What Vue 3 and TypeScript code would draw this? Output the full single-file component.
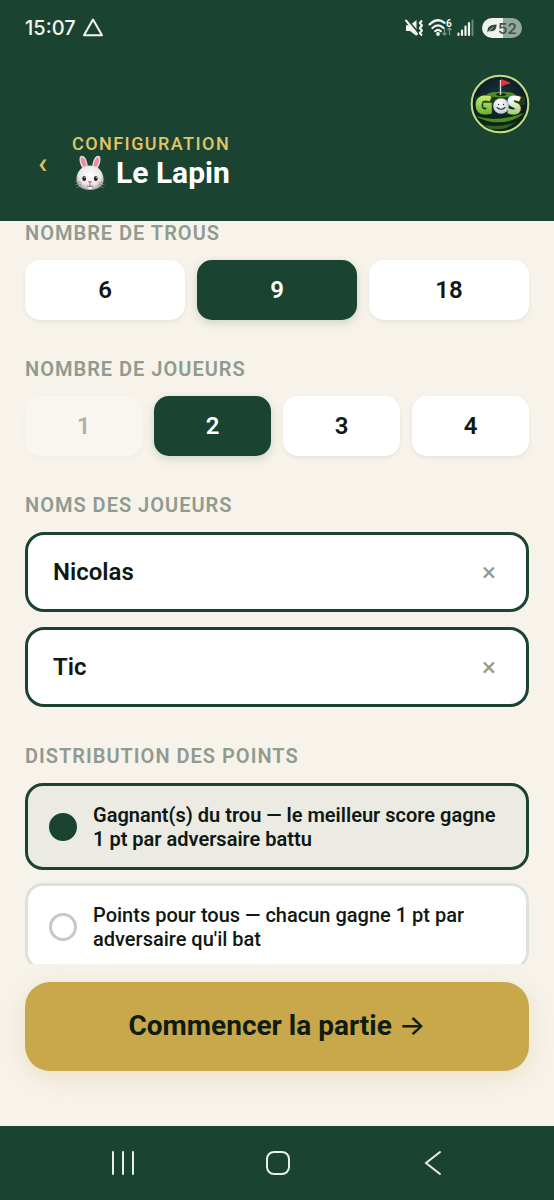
<script setup lang="ts">
import { ref } from 'vue'

interface Player {
  id: number
  name: string
}

interface Rule {
  value: string
  text: string
}

const holeChoices: number[] = [6, 9, 18]
const playerChoices: number[] = [1, 2, 3, 4]
const minPlayers = 2

const holes = ref<number>(9)
const playerCount = ref<number>(2)
const players = ref<Player[]>([
  { id: 1, name: 'Nicolas' },
  { id: 2, name: 'Tic' },
])

const rules: Rule[] = [
  { value: 'winner', text: 'Gagnant(s) du trou — le meilleur score gagne 1 pt par adversaire battu' },
  { value: 'all', text: "Points pour tous — chacun gagne 1 pt par adversaire qu'il bat" },
]
const rule = ref<string>('winner')

function setPlayerCount(count: number): void {
  playerCount.value = count
  const next = players.value.slice(0, count)
  while (next.length < count) next.push({ id: next.length + 1, name: '' })
  players.value = next
}
</script>

<template>
  <div class="screen">
    <header class="top">
      <div class="status">
        <div class="status-side">
          <span class="clock">15:07</span>
          <svg class="triangle" viewBox="0 0 22 20" width="22" height="20" aria-hidden="true">
            <path d="M11 1.500 20 17.300H2Z" fill="none" stroke="#f2f7f1" stroke-width="2" stroke-linejoin="round" />
          </svg>
        </div>
        <div class="status-side status-icons">
          <svg viewBox="0 0 20 20" width="20" height="20" aria-hidden="true">
            <path d="M2 7.200h4L12.500 2v16L6 13H2Z" fill="#f2f7f1" />
            <path d="M3 1 15 15.500" stroke="#1b4332" stroke-width="1.800" />
            <path d="M2 2.500 13 16" stroke="#f2f7f1" stroke-width="2" stroke-linecap="round" />
            <path d="M18 2.500 15.800 5 18 7.500 15.800 10 18 12.500 15.800 15 18 17.500" fill="none" stroke="#f2f7f1" stroke-width="2" stroke-linejoin="round" />
          </svg>
          <svg viewBox="0 0 25 20" width="25" height="20" aria-hidden="true">
            <g fill="none" stroke="#f2f7f1" stroke-width="2.2" stroke-linecap="round">
              <path d="M1.6 6.4Q9.5-1 16.5 4.8" />
              <path d="M4.4 10Q10 4.6 15.6 10" />
              <path d="M7.2 13.2Q10 10.6 12.8 13.2" />
            </g>
            <circle cx="10" cy="16" r="1.9" fill="#f2f7f1" />
            <text x="18" y="8.5" class="wifi-six">6</text>
            <path d="M16.5 10v7m-2-2 2 2 2-2M21.5 17v-7m-2 2 2-2 2 2" fill="none" stroke="#7d9a8b" stroke-width="1.2" />
          </svg>
          <svg viewBox="0 0 17 18" width="17" height="18" aria-hidden="true">
            <path d="M1.500 14.500v1.500M5 11.500v4.500M8.500 7.500v8.500M12 4v12" stroke="#f2f7f1" stroke-width="2.200" stroke-linecap="round" />
            <path d="M15.500 1.500v14.500" stroke="#6f8f80" stroke-width="1.800" stroke-linecap="round" />
          </svg>
          <span class="battery">
            <svg viewBox="0 0 10 9" width="10" height="9" aria-hidden="true">
              <path d="M.5 8.500C0 3 2.500.8 9.600.5 9.600 5.500 7 8 3 7Z" fill="#34483e" />
              <path d="M.5 8.500 6.500 3.200" stroke="#dfe6e0" stroke-width=".8" />
            </svg>
            <span>52</span>
          </span>
        </div>
      </div>

      <div class="brand">
        <svg viewBox="0 0 60 60" width="60" height="60" role="img" aria-label="GOS">
          <defs>
            <radialGradient id="logo-night" cx="50%" cy="38%" r="60%">
              <stop offset="0" stop-color="#1b3540" />
              <stop offset="1" stop-color="#07131c" />
            </radialGradient>
            <linearGradient id="logo-lime" x1="0" y1="0" x2="0" y2="1">
              <stop offset="0.200" stop-color="#d0f070" />
              <stop offset="0.900" stop-color="#5aa828" />
            </linearGradient>
            <linearGradient id="logo-steel" x1="0" y1="0" x2="0" y2="1">
              <stop offset="0.350" stop-color="#ffffff" />
              <stop offset="0.800" stop-color="#9ccb68" />
            </linearGradient>
            <radialGradient id="logo-ball" cx="42%" cy="34%" r="65%">
              <stop offset="0" stop-color="#ffffff" />
              <stop offset="1" stop-color="#c6cccf" />
            </radialGradient>
            <clipPath id="logo-clip"><circle cx="30" cy="30" r="28" /></clipPath>
          </defs>
          <circle cx="30" cy="30" r="28.500" fill="url(#logo-night)" />
          <g clip-path="url(#logo-clip)">
            <path d="M5 23Q30 14 55 23V31H5Z" fill="#1c3d1c" />
            <ellipse cx="31" cy="20.500" rx="14" ry="2.800" fill="#4f8a28" />
            <ellipse cx="31" cy="20.500" rx="5" ry="1.300" fill="#0c1f12" />
            <path d="M2 37Q29 49 58 36V60H2Z" fill="#0d2416" />
            <path d="M6 42Q26 49 54 39Q42 50 22 48Q12 46 6 42Z" fill="#4c8c26" />
            <path d="M14 51Q31 54 46 48Q36 57 20 55Z" fill="#2d6421" />
          </g>
          <circle cx="30" cy="30" r="28.300" fill="none" stroke="#c3dc86" stroke-width="2" />
          <path d="M30.500 21V6" stroke="#d8dadd" stroke-width="1.400" />
          <path d="M31 5 41 9 31 12.500Z" fill="#ed3038" />
          <g class="logo-word">
            <text x="5" y="40" fill="url(#logo-lime)" stroke="url(#logo-lime)">G</text>
            <text x="37" y="40" fill="url(#logo-steel)" stroke="url(#logo-steel)">S</text>
          </g>
          <circle cx="31" cy="32" r="7.800" fill="url(#logo-ball)" />
          <path d="M27 33.500Q31 37 35 33.500" fill="none" stroke="#26313a" stroke-width="1.100" stroke-linecap="round" />
          <circle cx="28.500" cy="30.500" r=".7" fill="#26313a" />
          <circle cx="33.500" cy="30.500" r=".7" fill="#26313a" />
        </svg>
      </div>

      <div class="heading">
        <button type="button" class="back" aria-label="Retour">‹</button>
        <div>
          <p class="kicker">CONFIGURATION</p>
          <h1>
            <svg class="rabbit" viewBox="0 0 36 36" width="36" height="36" aria-hidden="true">
              <defs>
                <radialGradient id="fur" cx="50%" cy="40%" r="60%">
                  <stop offset="0" stop-color="#ffffff" />
                  <stop offset="0.650" stop-color="#e9e8e8" />
                  <stop offset="1" stop-color="#a9a5a6" />
                </radialGradient>
              </defs>
              <path d="M12.500 16C7 10 6 1 9.500.8 14 .6 16 8 16 15Z" fill="#dedbdc" />
              <path d="M23.500 16C29 10 30 1 26.500.8 22 .6 20 8 20 15Z" fill="#dedbdc" />
              <path d="M12.500 13C8.500 8 8 3 9.700 2.600 12.500 2.200 14.500 8 14.500 12.500Z" fill="#ee8b9d" />
              <path d="M23.500 13C27.500 8 28 3 26.300 2.600 23.500 2.200 21.500 8 21.500 12.500Z" fill="#ee8b9d" />
              <path d="M18 10.500C25 10.500 30 15 31.300 21.500 33 30 27 35 18 35S3 30 4.700 21.500C6 15 11 10.500 18 10.500Z" fill="url(#fur)" />
              <ellipse cx="12.200" cy="23.500" rx="1.900" ry="2.600" fill="#2b1d1b" />
              <ellipse cx="23.800" cy="23.500" rx="1.900" ry="2.600" fill="#2b1d1b" />
              <circle cx="12.700" cy="22.600" r=".6" fill="#ffffff" />
              <circle cx="24.300" cy="22.600" r=".6" fill="#ffffff" />
              <path d="M15.800 26.500Q18 25.600 20.200 26.500L18 29.200Z" fill="#ee7285" />
              <path d="M18 29v2.200M15.200 30.800Q16.600 32 18 31.200 19.400 32 20.800 30.800" fill="none" stroke="#6b6264" stroke-width=".9" />
              <path d="M16.500 32h3v2h-3Z" fill="#ffffff" />
              <path d="M3.500 26.500 9.500 28M3.500 29.500 9.500 29.500M4.500 32.500 10 31M32.500 26.500 26.500 28M32.500 29.500 26.500 29.500M31.500 32.500 26 31" stroke="#8d898a" stroke-width=".7" />
            </svg>
            <span>Le Lapin</span>
          </h1>
        </div>
      </div>
    </header>

    <main class="content">
      <section>
        <h2 id="holes-label">NOMBRE DE TROUS</h2>
        <div class="choices" role="group" aria-labelledby="holes-label">
          <button
            v-for="n in holeChoices"
            :key="n"
            type="button"
            class="choice"
            :class="{ active: n === holes }"
            :aria-pressed="n === holes"
            @click="holes = n"
          >{{ n }}</button>
        </div>
      </section>

      <section>
        <h2 id="count-label">NOMBRE DE JOUEURS</h2>
        <div class="choices" role="group" aria-labelledby="count-label">
          <button
            v-for="n in playerChoices"
            :key="n"
            type="button"
            class="choice"
            :class="{ active: n === playerCount }"
            :aria-pressed="n === playerCount"
            :disabled="n < minPlayers"
            @click="setPlayerCount(n)"
          >{{ n }}</button>
        </div>
      </section>

      <section>
        <h2>NOMS DES JOUEURS</h2>
        <div class="names">
          <div v-for="(player, i) in players" :key="player.id" class="name-field">
            <input v-model="player.name" type="text" :aria-label="`Joueur ${i + 1}`" />
            <button type="button" class="clear" aria-label="Effacer" @click="player.name = ''">×</button>
          </div>
        </div>
      </section>

      <section>
        <h2 id="rule-label">DISTRIBUTION DES POINTS</h2>
        <div class="rules" role="radiogroup" aria-labelledby="rule-label">
          <label v-for="r in rules" :key="r.value" class="rule" :class="{ active: r.value === rule }">
            <input v-model="rule" type="radio" name="rule" :value="r.value" />
            <span>{{ r.text }}</span>
          </label>
        </div>
      </section>
    </main>

    <footer class="action">
      <button type="button" class="start">Commencer la partie <span class="arrow">→</span></button>
    </footer>

    <nav class="system" aria-label="Système">
      <button type="button" aria-label="Applications récentes">
        <svg viewBox="0 0 28 28" width="28" height="28" aria-hidden="true">
          <path d="M4 3v22M14 3v22M24 3v22" />
        </svg>
      </button>
      <button type="button" aria-label="Accueil">
        <svg viewBox="0 0 28 28" width="28" height="28" aria-hidden="true">
          <rect x="3" y="3" width="22" height="22" rx="7" />
        </svg>
      </button>
      <button type="button" aria-label="Précédent">
        <svg viewBox="0 0 28 28" width="28" height="28" aria-hidden="true">
          <path d="M21 3 7 14l14 11" />
        </svg>
      </button>
    </nav>
  </div>
</template>

<style>
body {
  margin: 0;
  background: #f7f3eb;
}
</style>

<style scoped>
.screen {
  display: flex;
  flex-direction: column;
  height: 100vh;
  background: #f7f3eb;
  color: #0f1813;
  font-family: Roboto, "Liberation Sans", sans-serif;
}

button,
input {
  font-family: inherit;
  color: inherit;
}

button {
  padding: 0;
  border: 0;
  background: none;
  cursor: pointer;
}

h1,
h2,
p {
  margin: 0;
}

.top {
  flex: none;
  padding-bottom: 28px;
  background: #1b4332;
  box-shadow: 0 1px 0 #1b4332;
}

.status {
  display: flex;
  justify-content: space-between;
  align-items: center;
  height: 56px;
  padding: 0 32px 0 25px;
}

.status-side {
  display: flex;
  align-items: center;
  gap: 6px;
}

.status-icons {
  gap: 4px;
}

.clock {
  color: #f2f7f1;
  font-family: Inter, Roboto, sans-serif;
  font-size: 20px;
  font-weight: 500;
}

.wifi-six {
  fill: #f2f7f1;
  font-size: 10px;
  font-weight: 700;
}

.battery {
  display: flex;
  align-items: center;
  justify-content: center;
  gap: 1px;
  width: 40px;
  height: 20px;
  margin-left: 4px;
  border-radius: 10px;
  background: linear-gradient(90deg, #eef3ee 52%, #94a99d 52%);
  color: #43564b;
  font-family: Inter, Roboto, sans-serif;
  font-size: 15px;
  font-weight: 600;
}

.brand {
  display: flex;
  justify-content: flex-end;
  padding: 18px 24px 0;
}

.brand svg {
  display: block;
}

.logo-word {
  font-family: "Open Sans", sans-serif;
  font-size: 24px;
  font-weight: 800;
  stroke-width: 1;
  stroke-linejoin: round;
}

.heading {
  display: flex;
  align-items: center;
  gap: 12px;
  padding: 0 25px;
}

.back {
  width: 35px;
  height: 48px;
  color: #e3c565;
  font-size: 30px;
  font-weight: 500;
  line-height: 40px;
}

.kicker {
  color: #e3c565;
  font-size: 18px;
  font-weight: 500;
  line-height: 20px;
  letter-spacing: 0.08em;
}

h1 {
  display: flex;
  align-items: center;
  gap: 8px;
  color: #ffffff;
  font-size: 30px;
  font-weight: 700;
  line-height: 38px;
}

.content {
  display: flex;
  flex: 1;
  flex-direction: column;
  gap: 36px;
  min-height: 0;
  padding: 0 25px;
  overflow: hidden;
}

section {
  flex: none;
}

h2 {
  margin-bottom: 14px;
  color: #8f9b8f;
  font-size: 20px;
  font-weight: 600;
  line-height: 26px;
  letter-spacing: 1px;
}

.choices {
  display: grid;
  grid-auto-columns: 1fr;
  grid-auto-flow: column;
  gap: 12px;
}

.choice {
  height: 60px;
  border-radius: 15px;
  background: #ffffff;
  box-shadow: 0 2px 4px rgba(27, 67, 50, 0.08);
  font-size: 24px;
  font-weight: 600;
}

.choice.active {
  background: #1b4332;
  box-shadow: 0 3px 10px rgba(27, 67, 50, 0.18);
  color: #ffffff;
}

.choice:disabled {
  opacity: 0.3;
}

.names {
  display: grid;
  gap: 15px;
}

.name-field {
  display: flex;
  align-items: center;
  box-sizing: border-box;
  height: 80px;
  padding: 0 21px 0 25px;
  border: 3px solid #1b4332;
  border-radius: 19px;
  background: #ffffff;
}

.name-field input {
  flex: 1;
  min-width: 0;
  padding: 0;
  border: 0;
  outline: 0;
  background: none;
  font-size: 24px;
  font-weight: 600;
}

.clear {
  width: 32px;
  height: 32px;
  color: #8f9b8f;
  font-size: 26px;
  line-height: 32px;
}

.rules {
  display: grid;
  gap: 13px;
}

.rule {
  display: flex;
  align-items: center;
  gap: 16px;
  box-sizing: border-box;
  min-height: 87px;
  padding: 16px 21px;
  border: 3px solid #dce3de;
  border-radius: 18px;
  background: #ffffff;
  font-size: 20px;
  font-weight: 500;
  line-height: 24px;
}

.rule.active {
  border-color: #1b4332;
  background: #ebebe3;
  font-weight: 600;
}

.rule input {
  flex: none;
  width: 28px;
  height: 28px;
  margin: 0;
  border: 3px solid #c5cac6;
  border-radius: 50%;
  appearance: none;
}

.rule input:checked {
  border-color: #1b4332;
  background: #1b4332;
}

.action {
  flex: none;
  padding: 18px 25px 55px;
}

.start {
  width: 100%;
  height: 89px;
  padding-bottom: 2px;
  border-radius: 25px;
  background: #c9a84c;
  box-shadow: 0 6px 24px rgba(201, 168, 76, 0.25);
  color: #101c0c;
  font-size: 28px;
  font-weight: 700;
  line-height: 32px;
}

.arrow {
  font-family: Inter, sans-serif;
  font-weight: 500;
  line-height: 1;
}

.system {
  display: grid;
  flex: none;
  grid-template-columns: repeat(3, 1fr);
  height: 74px;
  padding: 0 44px 0 46px;
  background: #1b4332;
}

.system button {
  display: flex;
  align-items: center;
  justify-content: center;
}

.system svg {
  fill: none;
  stroke: #e6f0e8;
  stroke-width: 2;
  stroke-linecap: round;
}
</style>
